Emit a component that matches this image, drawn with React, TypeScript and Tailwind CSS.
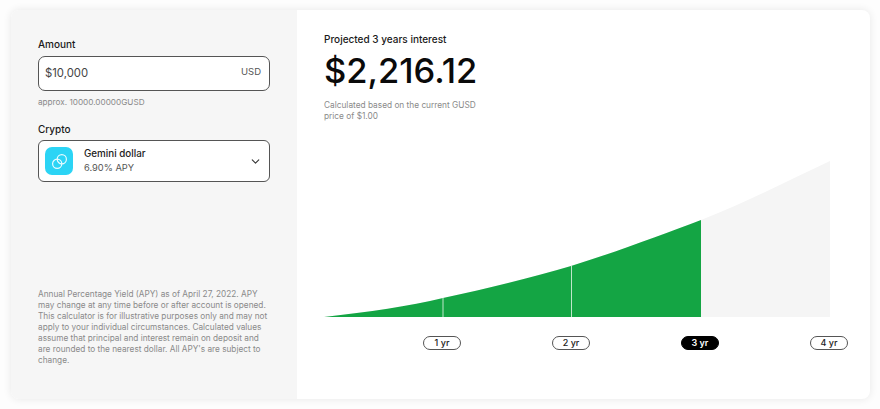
import React from 'react';
import { ChevronDown } from 'lucide-react';

const YEARS = [
    { label: '1 yr', active: false },
    { label: '2 yr', active: false },
    { label: '3 yr', active: true },
    { label: '4 yr', active: false },
];

const DISCLAIMER = [
    'Annual Percentage Yield (APY) as of April 27, 2022. APY',
    'may change at any time before or after account is opened.',
    'This calculator is for illustrative purposes only and may not',
    'apply to your individual circumstances. Calculated values',
    'assume that principal and interest remain on deposit and',
    "are rounded to the nearest dollar. All APY's are subject to",
    'change.',
];

const GrowthChart = () => (
    <svg width="506" height="158" viewBox="0 0 506 158" className="block">
        <path d="M0 157 C 45 152 85 146 119 138 C 165 128 210 117 247 106 C 295 91 340 74 377 60 C 425 41 465 20 506 1 L506 157 Z" fill="#f5f5f5" />
        <path d="M0 157 C 45 152 85 146 119 138 C 165 128 210 117 247 106 C 295 91 340 74 377 60 L377 157 Z" fill="#14a544" />
        <line x1="119" y1="138" x2="119" y2="157" stroke="#bfe6ca" strokeWidth="1" />
        <line x1="247.5" y1="106" x2="247.5" y2="157" stroke="#bfe6ca" strokeWidth="1" />
    </svg>
);

const GeminiLogo = () => (
    <div className="w-[28px] h-[28px] rounded-[7px] bg-[#2bd4f5] flex items-center justify-center">
        <svg width="17" height="17" viewBox="0 0 17 17" fill="none" stroke="#e8fbff" strokeWidth="1.2">
            <circle cx="10.8" cy="6.2" r="4.6" />
            <circle cx="6.2" cy="10.8" r="4.6" />
        </svg>
    </div>
);

export default function App() {
    return (
        <div className="w-[880px] h-[409px] bg-[#fdfdfd] pt-[10px] pl-[11px] font-['Inter',sans-serif] overflow-hidden">
            <div className="w-[859px] h-[389px] flex bg-white rounded-[8px] overflow-hidden shadow-[0_0_8px_rgba(0,0,0,0.09)]">

                {/* left form panel */}
                <div className="w-[286px] bg-[#f6f6f6] pl-[27px] pr-[27px] pt-[28px] pb-[33px] flex flex-col justify-between">
                    <div>
                        <div className="text-[10px] leading-[13px] font-medium text-[#1a1a1a]">Amount</div>
                        <div className="mt-[5px] h-[35px] bg-white border border-[#555] rounded-[7px] flex items-center justify-between pl-[6px] pr-[8px]">
                            <span className="text-[11.3px] text-[#444]">$10,000</span>
                            <span className="text-[9.5px] text-[#555] -mt-[2px]">USD</span>
                        </div>
                        <div className="mt-[5px] text-[8.2px] leading-[12px] text-[#8a8a8a]">approx. 10000.00000GUSD</div>
                        <div className="mt-[15px] text-[10px] leading-[13px] font-medium text-[#1a1a1a]">Crypto</div>
                        <div className="mt-[4px] h-[42px] bg-white border border-[#555] rounded-[6px] flex items-center pl-[6px] pr-[7px]">
                            <GeminiLogo />
                            <div className="ml-[11px] flex-1">
                                <div className="text-[9.8px] leading-[14px] font-medium text-[#222]">Gemini dollar</div>
                                <div className="text-[9.3px] leading-[14px] text-[#555]">6.90% APY</div>
                            </div>
                            <ChevronDown size={13} strokeWidth={2} className="text-[#333]" />
                        </div>
                    </div>
                    <div className="text-[8.25px] leading-[11px] text-[#8a8a8a] whitespace-nowrap">
                        {DISCLAIMER.map((line) => (
                            <div key={line}>{line}</div>
                        ))}
                    </div>
                </div>

                {/* right results panel */}
                <div className="flex-1 pl-[27px] pt-[22px]">
                    <div className="text-[10px] leading-[14px] font-medium text-[#1a1a1a]">Projected 3 years interest</div>
                    <div className="mt-[3px] text-[34.5px] leading-[44px] font-medium text-[#0a0a0a]">$2,216.12</div>
                    <div className="mt-[7px] w-[170px] text-[8.3px] leading-[11px] text-[#8a8a8a]">
                        Calculated based on the current GUSD price of $1.00
                    </div>
                    <div className="mt-[38px]">
                        <GrowthChart />
                    </div>
                    <div className="mt-[18px] ml-[99px] w-[425px] flex justify-between">
                        {YEARS.map((y) => (
                            <div
                                key={y.label}
                                className={y.active
                                    ? "w-[38px] h-[14px] rounded-full bg-black border border-black text-white text-[9px] font-semibold flex items-center justify-center"
                                    : "w-[38px] h-[14px] rounded-full bg-white border border-[#555] text-[#222] text-[9px] font-medium flex items-center justify-center"}
                            >
                                {y.label}
                            </div>
                        ))}
                    </div>
                </div>
            </div>
        </div>
    );
}
